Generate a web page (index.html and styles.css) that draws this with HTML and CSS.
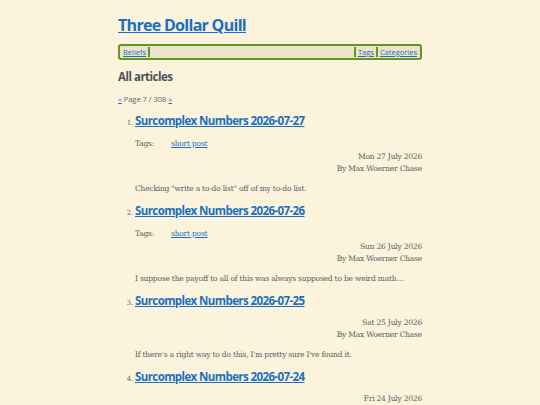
FILE: index.html
```html
<!DOCTYPE html>
<html lang="en">
<head>
<meta charset="utf-8">
<title>Three Dollar Quill</title>
<link rel="stylesheet" href="styles.css">
</head>
<body>
<div class="page">
  <header class="site-header">
    <h1 class="site-title"><a href="#">Three Dollar Quill</a></h1>
    <nav class="site-nav">
      <a href="#" class="nav-link">Beliefs</a>
      <span class="nav-sep"></span>
      <span class="nav-fill"></span>
      <span class="nav-sep"></span>
      <a href="#" class="nav-link">Tags</a>
      <span class="nav-sep"></span>
      <a href="#" class="nav-link">Categories</a>
    </nav>
  </header>
  <main>
    <h2 class="section-title">All articles</h2>
    <p class="pager"><a href="#">«</a> Page 7 / 308 <a href="#">»</a></p>
    <ol class="articles">
      <li class="article">
        <h3 class="article-title"><a href="#">Surcomplex Numbers 2026-07-27</a></h3>
        <div class="tags"><span class="tags-label">Tags:</span><a href="#">short post</a></div>
        <div class="meta"><div>Mon 27 July 2026</div><div>By Max Woerner Chase</div></div>
        <p class="excerpt">Checking "write a to-do list" off of my to-do list.</p>
      </li>
      <li class="article">
        <h3 class="article-title"><a href="#">Surcomplex Numbers 2026-07-26</a></h3>
        <div class="tags"><span class="tags-label">Tags:</span><a href="#">short post</a></div>
        <div class="meta"><div>Sun 26 July 2026</div><div>By Max Woerner Chase</div></div>
        <p class="excerpt">I suppose the payoff to all of this was always supposed to be weird math…</p>
      </li>
      <li class="article">
        <h3 class="article-title"><a href="#">Surcomplex Numbers 2026-07-25</a></h3>
        <div class="meta"><div>Sat 25 July 2026</div><div>By Max Woerner Chase</div></div>
        <p class="excerpt">If there's a right way to do this, I'm pretty sure I've found it.</p>
      </li>
      <li class="article">
        <h3 class="article-title"><a href="#">Surcomplex Numbers 2026-07-24</a></h3>
        <div class="meta"><div>Fri 24 July 2026</div><div>By Max Woerner Chase</div></div>
        <p class="excerpt">More numbers.</p>
      </li>
    </ol>
  </main>
</div>
</body>
</html>
```

FILE: styles.css
```css
html, body {
  margin: 0;
  padding: 0;
  background: #fbf3dc;
}
body {
  font-family: "DejaVu Serif", serif;
  font-size: 7.5px;
  line-height: 12px;
  letter-spacing: -0.2px;
  color: #5a5a5a;
}
a {
  color: #1a6fc2;
}
.page {
  width: 304px;
  margin: 0 auto;
  padding-top: 14px;
}
.site-title {
  margin: 0;
  font-family: "Open Sans", sans-serif;
  font-weight: 700;
  font-size: 16px;
  line-height: 22px;
  letter-spacing: -0.7px;
}
.site-title a {
  color: #1a6fc2;
}
.site-nav {
  margin-top: 8px;
  display: flex;
  align-items: stretch;
  height: 12px;
  border: 2px solid #5f9a1f;
  border-radius: 3px;
  background: #ebe4cd;
  padding: 0 2px;
  font-family: "Open Sans", sans-serif;
  font-size: 7.5px;
  line-height: 12px;
  letter-spacing: 0;
}
.nav-link {
  padding: 0 1px;
  color: #2a6db8;
}
.nav-sep {
  width: 2px;
  background: #5f9a1f;
  margin: 1px 1px;
}
.nav-fill {
  flex: 1;
}
.section-title {
  margin: 8px 0 0;
  font-family: "Open Sans", sans-serif;
  font-weight: 700;
  font-size: 11.5px;
  line-height: 18px;
  letter-spacing: -0.5px;
  color: #4b5259;
}
.pager {
  margin: 7px 0 0;
  font-family: "Open Sans", sans-serif;
  font-size: 7.5px;
  line-height: 12px;
  letter-spacing: 0;
  color: #666;
}
.articles {
  margin: 7px 0 0;
  padding-left: 17px;
}
.article::marker {
  font-size: 7px;
  color: #666;
}
.article-title {
  margin: 0;
  font-family: "Open Sans", sans-serif;
  font-weight: 700;
  font-size: 11.5px;
  line-height: 18px;
  letter-spacing: -0.6px;
}
.tags {
  margin-top: 8px;
  display: flex;
}
.tags-label {
  width: 36px;
}
.meta {
  text-align: right;
}
.tags + .meta {
  margin-top: 1px;
}
.article-title + .meta {
  margin-top: 7px;
}
.excerpt {
  margin: 8px 0 7px;
}
```
